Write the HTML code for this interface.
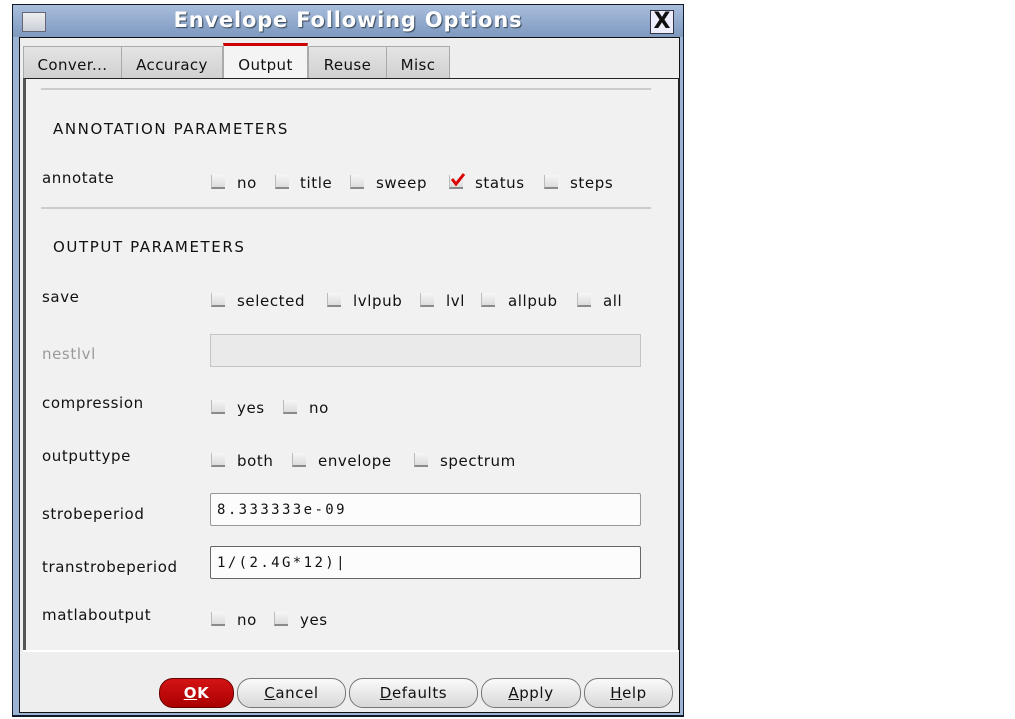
<!DOCTYPE html>
<html><head><style>
body{margin:0;width:1015px;height:719px;background:#fff;position:relative;overflow:hidden;font-family:"DejaVu Sans","Liberation Sans",sans-serif;font-size:15px;color:#111}
.a{position:absolute}
.cb{position:absolute;width:13px;height:12px;background:linear-gradient(#f6f6f6,#dcdcdc);border-bottom:2px solid #8a8a8a;border-left:1px solid #bbb}
.t{position:absolute;white-space:nowrap;letter-spacing:0.6px;top:1px}
.btn{position:absolute;top:678px;height:28px;border:1px solid #777;border-radius:14px;background:linear-gradient(#fafafa,#d8d8d8);text-align:center;line-height:28px;font-size:15px;letter-spacing:0.6px}
.tab{position:absolute;top:46px;height:32px;background:linear-gradient(#e4e4e4,#d0d0d0);border:1px solid #aaa;border-bottom:none;line-height:36px;font-size:15px;text-align:center;letter-spacing:0.4px}
.inp{position:absolute;left:210px;width:431px;height:33px;background:#fcfcfc;border:1px solid #999;border-radius:2px;font-family:"DejaVu Sans Mono","Liberation Mono",monospace;font-size:14px;letter-spacing:2.4px;line-height:33px;padding-left:6px;box-sizing:border-box}
</style></head><body>
<div class="a" style="left:12px;top:4px;width:672px;height:713px;background:#0f1a2a"></div>
<div class="a" style="left:13px;top:5px;width:670px;height:710px;background:#9db3d3"></div>
<div class="a" style="left:13px;top:5px;width:670px;height:32px;background:linear-gradient(#a8bedc,#7e98bf)"></div>
<div class="a" style="left:22px;top:12px;width:22px;height:18px;background:linear-gradient(#eee,#c8cfd8);border:1px solid #667"></div>
<div class="a" style="left:0;width:696px;top:8px;text-align:center;color:#fff;font-weight:bold;font-size:21px;letter-spacing:0.8px;text-shadow:1px 1px 1px #345">Envelope Following Options</div>
<div class="a" style="left:650px;top:10px;width:22px;height:22px;background:#eef;border:1px solid #334;font:bold 22px/22px 'DejaVu Sans',sans-serif;text-align:center;color:#111">X</div>
<div class="a" style="left:19px;top:37px;width:659px;height:674px;background:#efeeee;border:1px solid #111"></div>
<div class="tab" style="left:23px;width:97px">Conver...</div>
<div class="tab" style="left:121px;width:100px">Accuracy</div>
<div class="tab" style="left:223px;width:83px;background:#f4f4f4;top:43px;height:36px;border-top:3px solid #c00;line-height:38px">Output</div>
<div class="tab" style="left:308px;width:77px">Reuse</div>
<div class="tab" style="left:386px;width:62px">Misc</div>
<div class="a" style="left:23px;top:78px;width:652px;height:572px;background:#f2f1f1;border-left:3px solid #555;border-top:1px solid #222;border-right:2px solid #222"></div>
<div class="a" style="left:23px;top:650px;width:656px;height:2px;background:#fff"></div>
<div class="a" style="left:41px;top:88px;width:610px;height:2px;background:#ccc"></div>
<div class="a" style="left:41px;top:207px;width:610px;height:2px;background:#ccc"></div>
<div class="t" style="left:53px;top:120px;letter-spacing:1.6px">ANNOTATION PARAMETERS</div>
<div class="t" style="left:42px;top:169px">annotate</div>
<div class="cb" style="left:211px;top:175px"></div><div class="t" style="left:237px;top:174px">no</div>
<div class="cb" style="left:275px;top:175px"></div><div class="t" style="left:300px;top:174px">title</div>
<div class="cb" style="left:350px;top:175px"></div><div class="t" style="left:376px;top:174px">sweep</div>
<div class="cb" style="left:449px;top:175px"></div><svg class="a" style="left:450px;top:171px" width="16" height="16"><path d="M2 8 L6 13 L14 3" stroke="#d00" stroke-width="3" fill="none"/></svg><div class="t" style="left:475px;top:174px">status</div>
<div class="cb" style="left:544px;top:175px"></div><div class="t" style="left:570px;top:174px">steps</div>
<div class="t" style="left:53px;top:238px;letter-spacing:1.6px">OUTPUT PARAMETERS</div>
<div class="t" style="left:42px;top:288px">save</div>
<div class="cb" style="left:211px;top:293px"></div><div class="t" style="left:237px;top:292px">selected</div>
<div class="cb" style="left:327px;top:293px"></div><div class="t" style="left:353px;top:292px">lvlpub</div>
<div class="cb" style="left:420px;top:293px"></div><div class="t" style="left:446px;top:292px">lvl</div>
<div class="cb" style="left:481px;top:293px"></div><div class="t" style="left:508px;top:292px">allpub</div>
<div class="cb" style="left:577px;top:293px"></div><div class="t" style="left:603px;top:292px">all</div>
<div class="t" style="left:42px;top:345px;color:#999">nestlvl</div>
<div class="a" style="left:210px;top:334px;width:431px;height:33px;background:#eaeaea;border:1px solid #c4c4c4;box-sizing:border-box"></div>
<div class="t" style="left:42px;top:394px">compression</div>
<div class="cb" style="left:211px;top:400px"></div><div class="t" style="left:237px;top:399px">yes</div>
<div class="cb" style="left:283px;top:400px"></div><div class="t" style="left:309px;top:399px">no</div>
<div class="t" style="left:42px;top:447px">outputtype</div>
<div class="cb" style="left:211px;top:453px"></div><div class="t" style="left:237px;top:452px">both</div>
<div class="cb" style="left:292px;top:453px"></div><div class="t" style="left:318px;top:452px">envelope</div>
<div class="cb" style="left:414px;top:453px"></div><div class="t" style="left:440px;top:452px">spectrum</div>
<div class="t" style="left:42px;top:505px">strobeperiod</div>
<div class="inp" style="top:493px">8.333333e-09</div>
<div class="t" style="left:42px;top:558px">transtrobeperiod</div>
<div class="inp" style="top:546px;border:1px solid #666">1/(2.4G*12)|</div>
<div class="t" style="left:42px;top:606px">matlaboutput</div>
<div class="cb" style="left:211px;top:612px"></div><div class="t" style="left:237px;top:611px">no</div>
<div class="cb" style="left:274px;top:612px"></div><div class="t" style="left:300px;top:611px">yes</div>
<div class="btn" style="left:159px;width:73px;background:linear-gradient(#d41414,#a00);border-color:#600;color:#fff;font-weight:bold"><u>O</u>K</div>
<div class="btn" style="left:237px;width:107px"><u>C</u>ancel</div>
<div class="btn" style="left:349px;width:127px"><u>D</u>efaults</div>
<div class="btn" style="left:481px;width:98px"><u>A</u>pply</div>
<div class="btn" style="left:584px;width:87px"><u>H</u>elp</div>
</body></html>
